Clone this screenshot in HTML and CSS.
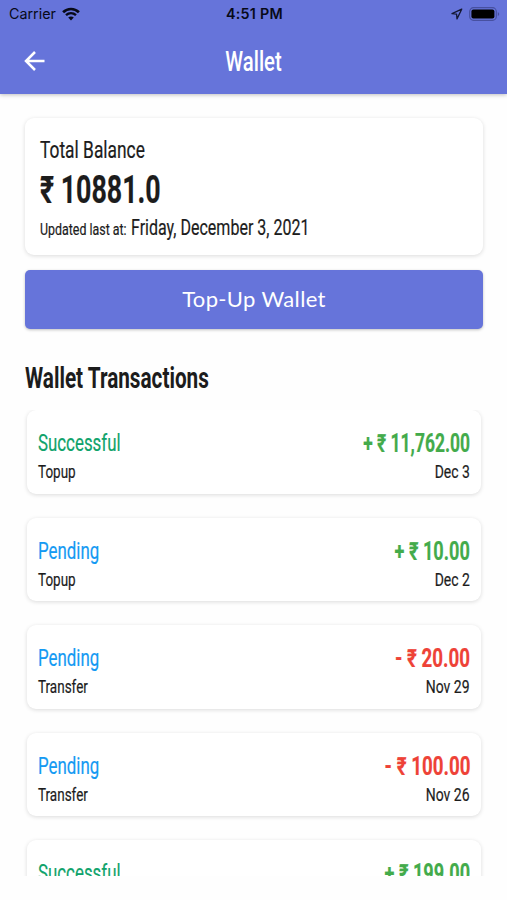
FILE: index.html
```html
<!DOCTYPE html>
<html lang="en">
<head>
<meta charset="utf-8">
<title>Wallet</title>
<link rel="stylesheet" href="styles.css">
</head>
<body>
<header class="appbar">
  <div class="status">
    <div class="carrier"><span>Carrier</span>
      <svg width="18" height="14" viewBox="0 0 18 14"><path d="M1.1 5.2C5.6.9 12.4.9 16.9 5.2" fill="none" stroke="#080a18" stroke-width="2.7"/><path d="M4 8.2c2.9-2.7 7.1-2.7 10 0" fill="none" stroke="#080a18" stroke-width="2.4"/><path d="M6.2 10.6c1.6-1.5 4-1.5 5.6 0L9 13.5z" fill="#080a18"/></svg>
    </div>
    <div class="clock">4:51 PM</div>
    <div class="indicators">
      <svg width="12" height="12" viewBox="0 0 12 12"><path d="M10.7 1.2 1 5.7l4.6.5.4 4.7z" fill="none" stroke="#141833" stroke-width="1.3" stroke-linejoin="round"/></svg>
      <svg width="31" height="14" viewBox="0 0 31 14"><rect x=".7" y=".7" width="26.6" height="12.6" rx="3.8" fill="none" stroke="#4750a0" stroke-width="1.2"/><rect x="2.4" y="2.4" width="23" height="9.2" rx="2" fill="#000"/><path d="M28.8 4.9c1.9.8 1.9 3.4 0 4.2z" fill="#4750a0"/></svg>
    </div>
  </div>
  <div class="nav">
    <svg class="back" width="22" height="22" viewBox="0 0 22 22"><path d="M20.5 11H2.5M11 2 2 11l9 9" fill="none" stroke="#fff" stroke-width="2.5"/></svg>
    <h1 class="title">Wallet</h1>
  </div>
</header>
<main class="content">
  <section class="balance">
    <div class="balance-label"><span class="fit">Total Balance</span></div>
    <div class="balance-value"><span class="fit">₹ 10881.0</span></div>
    <div class="updated"><span class="updated-label"><span class="fit">Updated last at:</span></span><span class="updated-date"><span class="fit">Friday, December 3, 2021</span></span></div>
  </section>
  <button class="topup"><span class="fit">Top-Up Wallet</span></button>
  <h2 class="heading"><span class="fit">Wallet Transactions</span></h2>
  <div class="list">
    <article class="card">
      <div class="row"><span class="state success">Successful</span><span class="amount credit long">+ ₹ 11,762.00</span></div>
      <div class="row meta"><span class="kind">Topup</span><span class="date">Dec 3</span></div>
    </article>
    <article class="card">
      <div class="row"><span class="state pending">Pending</span><span class="amount credit">+ ₹ 10.00</span></div>
      <div class="row meta"><span class="kind">Topup</span><span class="date">Dec 2</span></div>
    </article>
    <article class="card">
      <div class="row"><span class="state pending">Pending</span><span class="amount debit">- ₹ 20.00</span></div>
      <div class="row meta"><span class="kind">Transfer</span><span class="date">Nov 29</span></div>
    </article>
    <article class="card">
      <div class="row"><span class="state pending">Pending</span><span class="amount debit">- ₹ 100.00</span></div>
      <div class="row meta"><span class="kind">Transfer</span><span class="date">Nov 26</span></div>
    </article>
    <article class="card">
      <div class="row"><span class="state success">Successful</span><span class="amount credit">+ ₹ 199.00</span></div>
    </article>
  </div>
</main>
</body>
</html>
```
FILE: styles.css
```css
* { box-sizing: border-box; }
body { margin: 0; height: 900px; overflow: hidden; background: #fefefe; color: #1c1c1c; font-family: Roboto, "Liberation Sans", sans-serif; white-space: nowrap; }
svg { display: block; }
.fit { display: inline-block; transform-origin: left center; }

.appbar { height: 94px; background: #6674da; box-shadow: 0 1px 4px rgba(0,0,0,.25); }
.status { height: 27px; display: grid; grid-template-columns: 1fr auto 1fr; align-items: center; padding: 0 7px 0 9px; color: #080a18; font-family: Inter, sans-serif; font-size: 14.3px; }
.carrier { display: flex; align-items: center; gap: 6px; }
.clock { font-weight: 600; letter-spacing: .3px; }
.indicators { display: flex; align-items: center; justify-content: flex-end; gap: 6px; }
.nav { height: 67px; display: grid; grid-template-columns: 60px 1fr 60px; align-items: center; }
.back { margin-left: 24px; }
.title { margin: 2px 0 0; text-align: center; color: #fff; font-size: 27px; line-height: 34px; font-weight: 500; transform: scaleX(.75); }

.content { padding: 24px 24px 0 25px; }
.balance { height: 137px; padding: 19px 15px 0; border-radius: 9px; background: #fff; box-shadow: 0 1px 4px rgba(0,0,0,.14); -webkit-text-stroke: .2px currentColor; }
.balance-label { font-size: 23px; line-height: 28px; }
.balance-label .fit { transform: scaleX(.755); }
.balance-value { margin-top: 3px; font-size: 38px; line-height: 44px; font-weight: 700; }
.balance-value .fit { transform: scaleX(.705); }
.updated { display: flex; align-items: baseline; margin-top: 2px; line-height: 28px; }
.updated-label { width: 91px; font-size: 17px; }
.updated-label .fit { transform: scaleX(.73); }
.updated-date { font-size: 21.5px; width: 180px; }
.updated-date .fit { transform: scaleX(.745); }
.topup { display: block; width: 100%; height: 59px; margin: 15px 0 0; padding: 0 0 3px; border: 0; border-radius: 5px; background: #6674da; color: #fff; font-family: Lato, sans-serif; font-size: 22px; letter-spacing: .35px; box-shadow: 0 1px 3px rgba(0,0,0,.25); }
.topup .fit { transform-origin: center; }
.heading { margin: 31px 0 14px; font-size: 29.5px; line-height: 36px; font-weight: 700; }
.heading .fit { transform: scaleX(.703); }

.list { height: 466px; margin: 0 -10px; padding: 0 12px; overflow: hidden; display: flex; flex-direction: column; gap: 24px; }
.card { flex: 0 0 83.5px; padding: 18px 11px 0; border-radius: 9px; background: #fff; box-shadow: 0 1px 4px rgba(0,0,0,.14); -webkit-text-stroke: .2px currentColor; }
.row { display: flex; justify-content: space-between; line-height: 30px; }
.meta { margin-top: 2px; line-height: 24px; font-size: 19px; }
.state { font-size: 24.5px; transform: scaleX(.688); transform-origin: left; }
.amount { padding-top: 1px; margin-bottom: -1px; font-size: 25px; font-weight: 700; transform: scaleX(.725); transform-origin: right; }
.amount.long { transform: scaleX(.698); }
.amount.debit { transform: scaleX(.75); }
.kind { transform: scaleX(.71); transform-origin: left; }
.date { transform: scaleX(.735); transform-origin: right; }
.success { color: #0fa36b; }
.pending { color: #149af3; }
.credit { color: #43ab4b; }
.debit { color: #ee4237; }
```
